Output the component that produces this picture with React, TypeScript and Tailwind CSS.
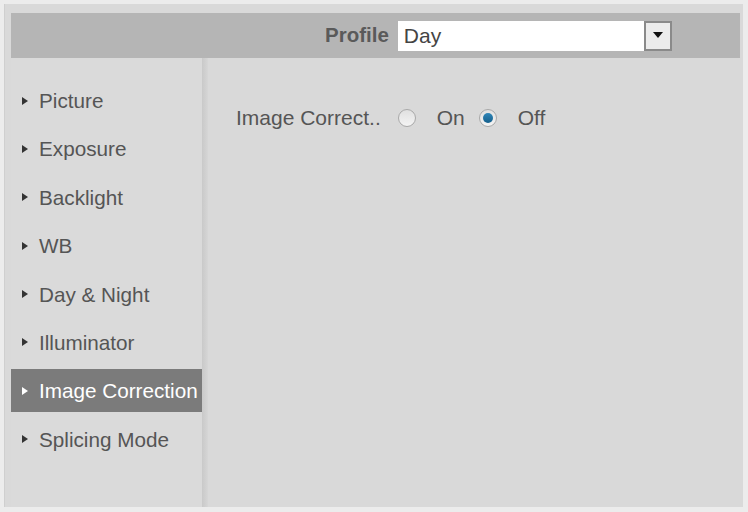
import React from "react";

const items = [
  "Picture",
  "Exposure",
  "Backlight",
  "WB",
  "Day & Night",
  "Illuminator",
  "Image Correction",
  "Splicing Mode",
];

function Radio({ checked }: { checked?: boolean }) {
  return (
    <span className="flex h-[18px] w-[18px] items-center justify-center rounded-full border border-[#a9a9a9] bg-gradient-to-b from-[#e0e0e0] to-[#f4f4f4]">
      {checked && (
        <span className="h-[10px] w-[10px] rounded-full bg-gradient-to-b from-[#2f86b8] to-[#145f8c]" />
      )}
    </span>
  );
}

export default function App() {
  const active = "Image Correction";
  return (
    <div
      className="h-[512px] w-[748px] bg-[#ececec] pt-[4px] pl-[4px] pr-[5px] pb-[5px] text-[#555]"
      style={{ fontFamily: '"Liberation Sans", Arial, sans-serif' }}
    >
      <div className="flex h-full flex-col border-l border-[#cfcfcf] bg-[#d9d9d9] pt-[9px] pl-[6px] pr-[3px]">
        {/* profile bar */}
        <div className="flex h-[45px] items-center bg-[#b5b5b5] pl-[314px]">
          <span className="text-[20.5px] font-bold text-[#5a5a5a]">Profile</span>
          <div className="ml-[9px] flex h-[30px] w-[274px] items-stretch">
            <div className="flex flex-1 items-center bg-white pl-[6px] text-[21px] text-[#444]">
              Day
            </div>
            <div className="flex w-[28px] items-center justify-center border-2 border-[#8a8a8a] bg-[#ececec]">
              <svg width="10" height="7" viewBox="0 0 10 7">
                <polygon points="0,0 10,0 5,6" fill="#111" />
              </svg>
            </div>
          </div>
        </div>

        <div className="flex flex-1">
          {/* sidebar */}
          <div className="flex w-[191px] flex-col gap-[5.4px] bg-[#dadada] pt-[21px]">
            {items.map((label) => {
              const sel = label === active;
              return (
                <div
                  key={label}
                  className={`flex h-[43px] items-center whitespace-nowrap pl-[10px] text-[20.7px] ${
                    sel ? "bg-[#7b7b7b] text-white" : "text-[#555]"
                  }`}
                >
                  <svg width="8" height="10" viewBox="0 0 8 10" className="mr-[10px]">
                    <polygon points="1,1 7,5 1,9" fill={sel ? "#fff" : "#333"} />
                  </svg>
                  {label}
                </div>
              );
            })}
          </div>
          <div className="w-[6px] bg-gradient-to-r from-[#c9c9c9] to-[#d6d6d6]" />

          {/* content */}
          <div className="flex-1 pl-[28px] pt-[44px]">
            <div className="flex items-center text-[21px] text-[#555]">
              <span className="mr-[17px]">Image Correct..</span>
              <Radio />
              <span className="ml-[21px] mr-[14px]">On</span>
              <Radio checked />
              <span className="ml-[21px]">Off</span>
            </div>
          </div>
        </div>
      </div>
    </div>
  );
}
